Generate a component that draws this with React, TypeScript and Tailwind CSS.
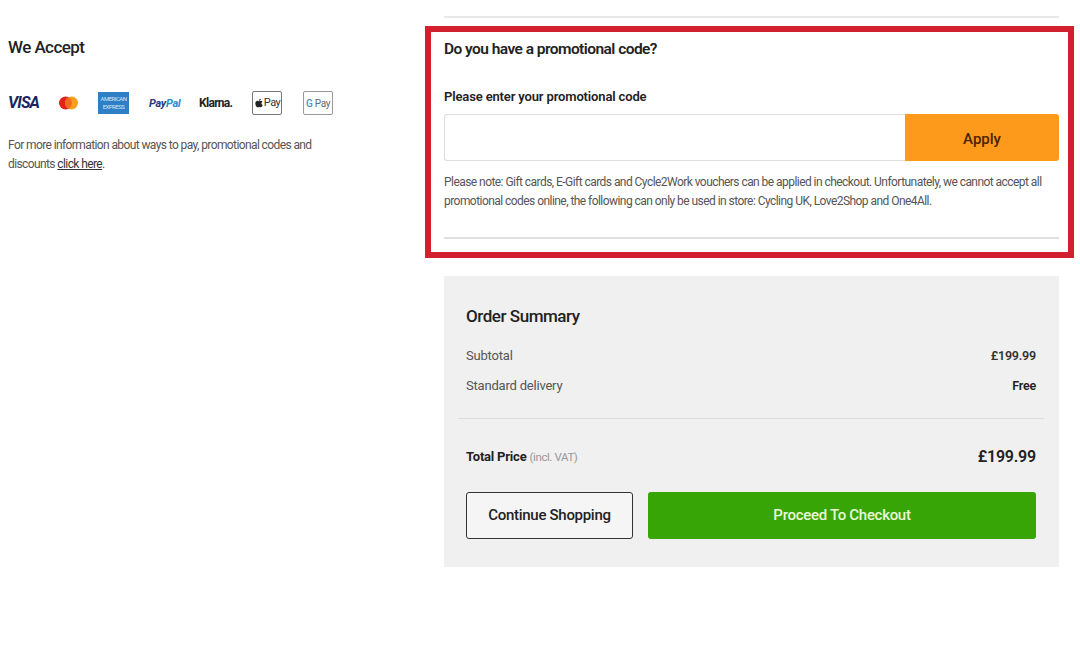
import { FaApple } from "react-icons/fa";

const font = "[font-family:Roboto,'Liberation_Sans',sans-serif]";

function PayLogos() {
  return (
    <div className="mt-[32px] flex h-[26px] items-center">
      <span className="w-[31px] text-[16px] leading-none font-bold italic tracking-[-0.9px] text-[#1a2560]">VISA</span>
      <svg className="ml-[20px] h-[16px] w-[19px]" viewBox="0 0 19 16" aria-hidden="true">
        <circle cx="6.5" cy="8" r="6.5" fill="#e2231a" />
        <circle cx="12.5" cy="8" r="6.5" fill="#f79e1b" />
        <path d="M9.5 2.3a6.5 6.5 0 0 1 0 11.4a6.5 6.5 0 0 1 0-11.4z" fill="#f26a21" />
      </svg>
      <div className="ml-[20px] flex h-[22px] w-[31px] flex-col items-center justify-center bg-[#2f7fc6] text-[6px] leading-[8px] text-[#d5e6f5]">
        <span className="tracking-[-0.5px]">AMERICAN</span>
        <span className="tracking-[-0.5px]">EXPRESS</span>
      </div>
      <span className="ml-[20px] w-[33px] text-[11px] leading-none font-bold tracking-[-0.3px] italic text-[#253b80]">
        Pay<span className="text-[#2a8ccf]">Pal</span>
      </span>
      <span className="ml-[17px] w-[32px] text-[12px] leading-none font-bold tracking-[-0.7px] text-[#222222]">Klarna.</span>
      <div className="ml-[21px] flex h-[24px] w-[30px] items-center justify-center rounded-[2px] border border-[#777777] text-[11px] text-[#333333]">
        <FaApple className="h-[10px] w-[10px] text-[#222222]" />
        <span className="tracking-[-0.5px]">Pay</span>
      </div>
      <div className="ml-[21px] flex h-[24px] w-[30px] items-center justify-center gap-[2px] rounded-[2px] border border-[#999999] text-[10px] text-[#666666]">
        <span className="font-medium text-[#4a90c8]">G</span>
        <span className="tracking-[-0.4px]">Pay</span>
      </div>
    </div>
  );
}

function Row({ label, value, bold }: { label: string; value: string; bold?: boolean }) {
  return (
    <div className="flex h-[30px] items-center justify-between">
      <span className="text-[13px] tracking-[-0.2px] text-[#555555]">{label}</span>
      <span className={`text-[12.5px] font-semibold tracking-[-0.2px] ${bold ? "text-[#222222]" : "text-[#333333]"}`}>{value}</span>
    </div>
  );
}

export default function App() {
  return (
    <div className={`flex h-[648px] w-[1080px] overflow-hidden bg-white text-[#222222] ${font}`}>
      <div className="w-[444px] shrink-0 pt-[36px] pl-[8px]">
        <h2 className="text-[17px] leading-[22px] font-medium tracking-[-0.55px] text-[#222222]">We Accept</h2>
        <PayLogos />
        <p className="mt-[20px] w-[320px] text-[12px] leading-[19px] tracking-[-0.6px] text-[#555555]">
          For more information about ways to pay, promotional codes and discounts{" "}
          <span className="text-[#333333] underline">click here</span>.
        </p>
      </div>

      <div className="w-[615px] shrink-0 pt-[16px]">
        <div className="h-[2px] bg-[#e8e8e8]" />
        <div className="mt-[8px] -mr-[15px] -ml-[19px] h-[232px] border-[6px] border-[#d2202f] px-[13px] pt-[6px]">
          <h3 className="text-[15.5px] leading-[22px] font-semibold tracking-[-0.55px] text-[#222222]">Do you have a promotional code?</h3>
          <div className="mt-[28px] text-[13px] leading-[18px] font-semibold tracking-[-0.14px] text-[#222222]">Please enter your promotional code</div>
          <div className="mt-[8px] flex h-[47px] w-[615px]">
            <div className="flex-1 rounded-l-[3px] border border-r-0 border-[#dddddd] bg-white" />
            <button className="w-[154px] rounded-r-[3px] bg-[#fd9a1c] pt-[4px] text-[15px] font-medium text-[#4a2400]">Apply</button>
          </div>
          <p className="mt-[12px] w-[615px] text-[12px] leading-[19px] tracking-[-0.55px] text-[#555555]">
            Please note: Gift cards, E-Gift cards and Cycle2Work vouchers can be applied in checkout. Unfortunately, we cannot accept all promotional codes online, the following can only be used in store: Cycling UK, Love2Shop and One4All.
          </p>
          <div className="mt-[26px] h-[2px] w-[615px] bg-[#dfdfdf]" />
        </div>

        <section className="mt-[18px] h-[291px] bg-[#f0f0f0] pt-[28px] pr-[23px] pl-[22px]">
          <h3 className="text-[17px] leading-[24px] font-medium tracking-[-0.45px] text-[#222222]">Order Summary</h3>
          <div className="mt-[12px] pt-[1px]">
            <Row label="Subtotal" value="£199.99" />
            <Row label="Standard delivery" value="Free" bold />
          </div>
          <div className="-mr-[8px] -ml-[8px] mt-[17px] h-px bg-[#dcdcdc]" />
          <div className="mt-[27px] flex h-[22px] items-center justify-between">
            <span className="text-[13px] font-bold tracking-[-0.2px] text-[#222222]">
              Total Price <span className="text-[11.5px] font-normal tracking-[-0.4px] text-[#999999]">(incl. VAT)</span>
            </span>
            <span className="text-[16px] font-semibold tracking-[-0.2px] text-[#222222]">£199.99</span>
          </div>
          <div className="mt-[24px] flex gap-[15px]">
            <button className="h-[47px] w-[167px] rounded-[3px] border border-[#333333] bg-[#f5f5f5] text-[15px] font-medium tracking-[-0.3px] text-[#222222]">Continue Shopping</button>
            <button className="h-[47px] flex-1 rounded-[3px] bg-[#37a506] text-[15px] font-medium tracking-[-0.3px] text-[#e8f8d8]">Proceed To Checkout</button>
          </div>
        </section>
      </div>
    </div>
  );
}
